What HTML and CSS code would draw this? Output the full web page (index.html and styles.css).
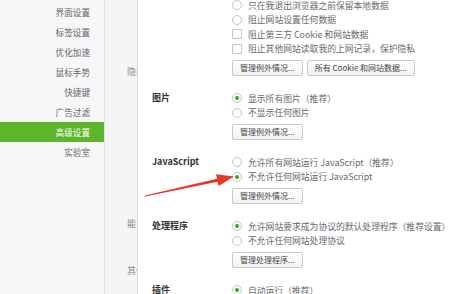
FILE: index.html
```html
<!DOCTYPE html>
<html lang="zh-CN">
<head>
<meta charset="utf-8">
<title>高级设置</title>
<link rel="stylesheet" href="styles.css">
</head>
<body>
<div class="page">
  <nav class="sidebar">
    <div class="nav-item">界面设置</div>
    <div class="nav-item">标签设置</div>
    <div class="nav-item">优化加速</div>
    <div class="nav-item">鼠标手势</div>
    <div class="nav-item">快捷键</div>
    <div class="nav-item">广告过滤</div>
    <div class="nav-item active">高级设置</div>
    <div class="nav-item">实验室</div>
  </nav>
  <div class="strip">
    <div class="strip-label first">隐私设置</div>
    <div class="strip-label second">能</div>
    <div class="strip-label third">其他</div>
  </div>
  <main class="content">
    <section class="section top">
      <div class="title"></div>
      <div class="options">
        <div class="row"><span class="radio"></span>只在我退出浏览器之前保留本地数据</div>
        <div class="row"><span class="radio"></span>阻止网站设置任何数据</div>
        <div class="row"><span class="check"></span>阻止第三方 Cookie 和网站数据</div>
        <div class="row"><span class="check"></span>阻止其他网站读取我的上网记录，保护隐私</div>
        <div class="buttons"><span class="btn">管理例外情况...</span><span class="btn">所有 Cookie 和网站数据...</span></div>
      </div>
    </section>
    <section class="section">
      <div class="title">图片</div>
      <div class="options">
        <div class="row"><span class="radio on"></span>显示所有图片（推荐）</div>
        <div class="row"><span class="radio"></span>不显示任何图片</div>
        <div class="buttons"><span class="btn">管理例外情况...</span></div>
      </div>
    </section>
    <section class="section">
      <div class="title">JavaScript</div>
      <div class="options">
        <div class="row"><span class="radio"></span>允许所有网站运行 JavaScript（推荐）</div>
        <div class="row"><span class="radio on"></span>不允许任何网站运行 JavaScript</div>
        <div class="buttons"><span class="btn">管理例外情况...</span></div>
      </div>
    </section>
    <section class="section">
      <div class="title">处理程序</div>
      <div class="options">
        <div class="row"><span class="radio on"></span>允许网站要求成为协议的默认处理程序（推荐设置）</div>
        <div class="row"><span class="radio"></span>不允许任何网站处理协议</div>
        <div class="buttons"><span class="btn">管理处理程序...</span></div>
      </div>
    </section>
    <section class="section">
      <div class="title">插件</div>
      <div class="options">
        <div class="row"><span class="radio on"></span>自动运行（推荐）</div>
      </div>
    </section>
  </main>
  <svg class="arrow" width="450" height="294" viewBox="0 0 450 294" aria-hidden="true">
    <polygon points="144.9,195.4 217.0,178.7 216.0,174.3 234,176.5 218.6,186.1 217.6,181.7 145.1,196.6" fill="#e8362c"/>
  </svg>
</div>
</body>
</html>
```
FILE: styles.css
```css
html, body {
  margin: 0;
  padding: 0;
  width: 450px;
  height: 294px;
  overflow: hidden;
  background: #ffffff;
  font-family: "Noto Sans CJK SC", "Noto Sans", sans-serif;
}

.page {
  position: relative;
  display: flex;
  width: 450px;
  height: 294px;
  overflow: hidden;
}

.sidebar {
  width: 104px;
  flex: none;
  background: #f6f7f9;
  border-right: 1px solid #e3e4e6;
  padding-top: 2px;
  box-sizing: content-box;
}

.nav-item {
  height: 20px;
  line-height: 20px;
  text-align: right;
  padding-right: 14px;
  font-size: 8.6px;
  color: #666666;
}

.nav-item.active {
  background: #5db52c;
  color: #ffffff;
}

.strip {
  width: 32px;
  flex: none;
  background: #f4f5f7;
  border-right: 1px solid #dcdde0;
  overflow: hidden;
  display: flex;
  flex-direction: column;
}

.strip-label {
  height: 14px;
  line-height: 14px;
  padding-left: 22px;
  white-space: nowrap;
  font-size: 9px;
  color: #8a8a8a;
}

.strip-label.first { margin-top: 65px; }
.strip-label.second { margin-top: 138px; }
.strip-label.third { margin-top: 33px; }

.content {
  flex: 1;
  padding-left: 14px;
  overflow: hidden;
}

.section {
  display: flex;
  margin-bottom: 15px;
}

.section.top {
  margin-top: -2.25px;
}

.title {
  width: 80px;
  flex: none;
  height: 14.5px;
  line-height: 14.5px;
  font-size: 9px;
  font-weight: bold;
  color: #333333;
}

.options {
  display: flex;
  flex-direction: column;
}

.row {
  height: 14.5px;
  display: flex;
  align-items: center;
  white-space: nowrap;
  font-size: 8.8px;
  color: #6a6a6a;
}

.radio {
  width: 8px;
  height: 8px;
  border: 1px solid #c4c4c4;
  border-radius: 50%;
  background: #ffffff;
  margin-right: 6px;
  flex: none;
  display: flex;
  align-items: center;
  justify-content: center;
}

.radio.on::after {
  content: "";
  width: 4px;
  height: 4px;
  border-radius: 50%;
  background: #3aa51e;
}

.check {
  width: 8px;
  height: 8px;
  border: 1px solid #c4c4c4;
  border-radius: 1px;
  background: #ffffff;
  margin-right: 6px;
  flex: none;
}

.buttons {
  display: flex;
  gap: 4px;
  margin-top: 4px;
}

.btn {
  height: 14px;
  line-height: 14px;
  padding: 0 7px;
  border: 1px solid #c9c9c9;
  border-radius: 2px;
  background: linear-gradient(#ffffff, #f2f2f2);
  font-size: 8px;
  color: #444444;
  white-space: nowrap;
}

.arrow {
  position: absolute;
  left: 0;
  top: 0;
  pointer-events: none;
}
```
